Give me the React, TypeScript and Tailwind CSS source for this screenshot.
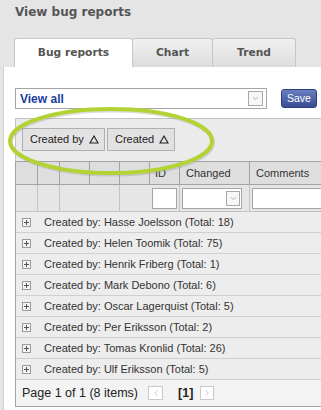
import { ChevronDown, ChevronLeft, ChevronRight } from 'lucide-react'

const groups = [
  { name: 'Hasse Joelsson', total: 18 },
  { name: 'Helen Toomik', total: 75 },
  { name: 'Henrik Friberg', total: 1 },
  { name: 'Mark Debono', total: 6 },
  { name: 'Oscar Lagerquist', total: 5 },
  { name: 'Per Eriksson', total: 2 },
  { name: 'Tomas Kronlid', total: 26 },
  { name: 'Ulf Eriksson', total: 5 },
]

const verdana = { fontFamily: '"DejaVu Sans", Verdana, sans-serif' }
const tahoma = { fontFamily: '"Liberation Sans", Arial, sans-serif' }

const PlusBox = () => (
  <div className="relative w-[9px] h-[9px] border border-[#9a9a9a] bg-[#f4f4f4]">
    <div className="absolute left-[1px] top-[3px] w-[5px] h-px bg-[#555]" />
    <div className="absolute left-[3px] top-[1px] w-px h-[5px] bg-[#555]" />
  </div>
)

// sort arrow in the group buttons
const SortUp = () => (
  <svg width="10" height="9" viewBox="0 0 10 9">
    <path d="M5 1 L9 8 L1 8 Z" fill="none" stroke="#222" strokeWidth="1.1" strokeLinejoin="miter" />
  </svg>
)

const App = () => {
  return (
    <div className="relative w-[321px] h-[410px] overflow-hidden bg-[#e5e5e5]" style={tahoma}>
      {/* Page title */}
      <div className="h-[38px] pl-[15px] pt-[4px] text-[12px] leading-[16px] font-bold text-[#555]" style={verdana}>
        View bug reports
      </div>

      {/* Tabs */}
      <div className="flex h-[29px] pl-[14px]" style={verdana}>
        <div className="w-[119px] h-full flex items-center justify-center bg-white border border-b-0 border-[#c8c8c8] rounded-t-[3px] text-[10.7px] font-bold text-[#555]">
          Bug reports
        </div>
        <div className="w-[80px] h-full flex items-center justify-center bg-gradient-to-b from-[#f1f1f1] to-[#dcdcdc] border border-l-0 border-b-0 border-[#c4c4c4] rounded-t-[3px] text-[10.7px] font-bold text-[#555]">
          Chart
        </div>
        <div className="w-[83px] h-full flex items-center justify-center bg-gradient-to-b from-[#f1f1f1] to-[#dcdcdc] border border-l-0 border-b-0 border-[#c4c4c4] rounded-t-[3px] text-[10.7px] font-bold text-[#555]">
          Trend
        </div>
      </div>

      {/* Panel */}
      <div className="ml-[3px] w-[360px] h-[400px] bg-white border-l border-[#cdcdcd] pt-[21px] pl-[11px]">
        {/* Filter selector */}
        <div className="flex items-start">
          <div className="w-[252px] h-[21px] border border-[#a5a5a5] flex items-center justify-between pl-[4px] pr-[3px]">
            <span className="text-[12px] font-bold text-[#1c3c9c]">View all</span>
            <div className="w-[15px] h-[15px] border border-[#a8a8a8] bg-[#f7f7f7] flex items-center justify-center">
              <ChevronDown className="w-[9px] h-[9px] text-[#777]" strokeWidth={1.5} />
            </div>
          </div>
          <button className="ml-[14px] mt-px w-[36px] h-[19px] rounded-[3px] border border-[#2e3d7c] bg-gradient-to-b from-[#6a7fc0] to-[#3a4c93] text-white text-[10.5px] leading-none flex items-center justify-center">
            Save
          </button>
        </div>

        {/* Group panel */}
        <div className="mt-[9px] h-[43px] bg-[#ebebeb] border-t border-l border-[#c4c4c4] pt-[9px] pl-[6px] flex gap-[2px]">
          <div className="w-[83px] h-[23px] bg-[#e2e2e2] border border-[#b0b0b0] flex items-center pl-[7px] gap-[5px] text-[11px] text-[#222]">
            <span>Created by</span>
            <SortUp />
          </div>
          <div className="w-[68px] h-[23px] bg-[#e2e2e2] border border-[#b0b0b0] flex items-center pl-[7px] gap-[5px] text-[11px] text-[#222]">
            <span>Created</span>
            <SortUp />
          </div>
        </div>

        {/* Grid */}
        <div className="border-l border-[#a3a3a3] text-[11px] text-[#333]">
          {/* Header row */}
          <div className="flex h-[24px] border-t border-b border-[#a3a3a3] bg-[#dedede]">
            <div className="w-[22px] shrink-0 border-r border-[#a3a3a3]" />
            <div className="w-[22px] shrink-0 border-r border-[#a3a3a3]" />
            <div className="w-[30px] shrink-0 border-r border-[#a3a3a3]" />
            <div className="w-[30px] shrink-0 border-r border-[#a3a3a3]" />
            <div className="w-[30px] shrink-0 border-r border-[#a3a3a3]" />
            <div className="w-[30px] shrink-0 border-r border-[#a3a3a3] flex items-center pl-[5px]">ID</div>
            <div className="w-[70px] shrink-0 border-r border-[#a3a3a3] flex items-center pl-[6px]">Changed</div>
            <div className="flex-1 flex items-center pl-[6px]">Comments</div>
          </div>

          {/* Filter row */}
          <div className="flex h-[27px] border-b border-[#c4c4c4] bg-[#e6e6e6]">
            <div className="w-[22px] shrink-0 border-r border-[#c4c4c4]" />
            <div className="w-[22px] shrink-0 border-r border-[#c4c4c4]" />
            <div className="w-[60px] shrink-0 border-r border-[#c4c4c4]" />
            <div className="w-[60px] shrink-0 border-r border-[#c4c4c4] flex items-center pl-[32px]">
              <div className="w-[25px] h-[21px] bg-white border border-[#a5a5a5]" />
            </div>
            <div className="w-[70px] shrink-0 border-r border-[#c4c4c4] flex items-center pl-[2px]">
              <div className="w-[60px] h-[21px] bg-white border border-[#a5a5a5] flex items-center justify-end pr-px">
                <div className="w-[14px] h-[15px] border border-[#a8a8a8] bg-[#f7f7f7] flex items-center justify-center">
                  <ChevronDown className="w-[9px] h-[9px] text-[#777]" strokeWidth={1.5} />
                </div>
              </div>
            </div>
            <div className="flex-1 flex items-center pl-[2px]">
              <div className="w-full h-[21px] bg-white border border-[#a5a5a5]" />
            </div>
          </div>

          {/* Group rows */}
          {groups.map((g) => (
            <div key={g.name} className="flex items-center h-[21px] border-b border-[#cfcfcf] bg-[#ededed] pl-[6px]">
              <PlusBox />
              <span className="ml-[13px]">
                Created by: {g.name} (Total: {g.total})
              </span>
            </div>
          ))}

          {/* Pager */}
          <div className="flex items-center h-[27px] border-b border-[#a3a3a3] bg-[#f3f3f3] pl-[6px] text-[12.5px] text-[#222]">
            <span>Page 1 of 1 (8 items)</span>
            <div className="ml-[10px] w-[15px] h-[14px] border border-[#c9c9c9] bg-white flex items-center justify-center">
              <ChevronLeft className="w-[10px] h-[10px] text-[#aaa]" strokeWidth={1.5} />
            </div>
            <span className="ml-[15px] font-bold">[1]</span>
            <div className="ml-[7px] w-[14px] h-[14px] border border-[#c9c9c9] bg-white flex items-center justify-center">
              <ChevronRight className="w-[10px] h-[10px] text-[#aaa]" strokeWidth={1.5} />
            </div>
          </div>
        </div>
      </div>

      {/* Highlight ellipse */}
      <svg className="absolute left-0 top-[100px] pointer-events-none" width="230" height="85" viewBox="0 0 230 85">
        <ellipse cx="111" cy="41" rx="101" ry="32" fill="none" stroke="#9a9a9a" strokeOpacity="0.35" strokeWidth="4" transform="translate(1 1.5)" />
        <ellipse cx="111" cy="41" rx="101" ry="32" fill="none" stroke="#b3d335" strokeWidth="4" />
      </svg>
    </div>
  )
}

export default App
